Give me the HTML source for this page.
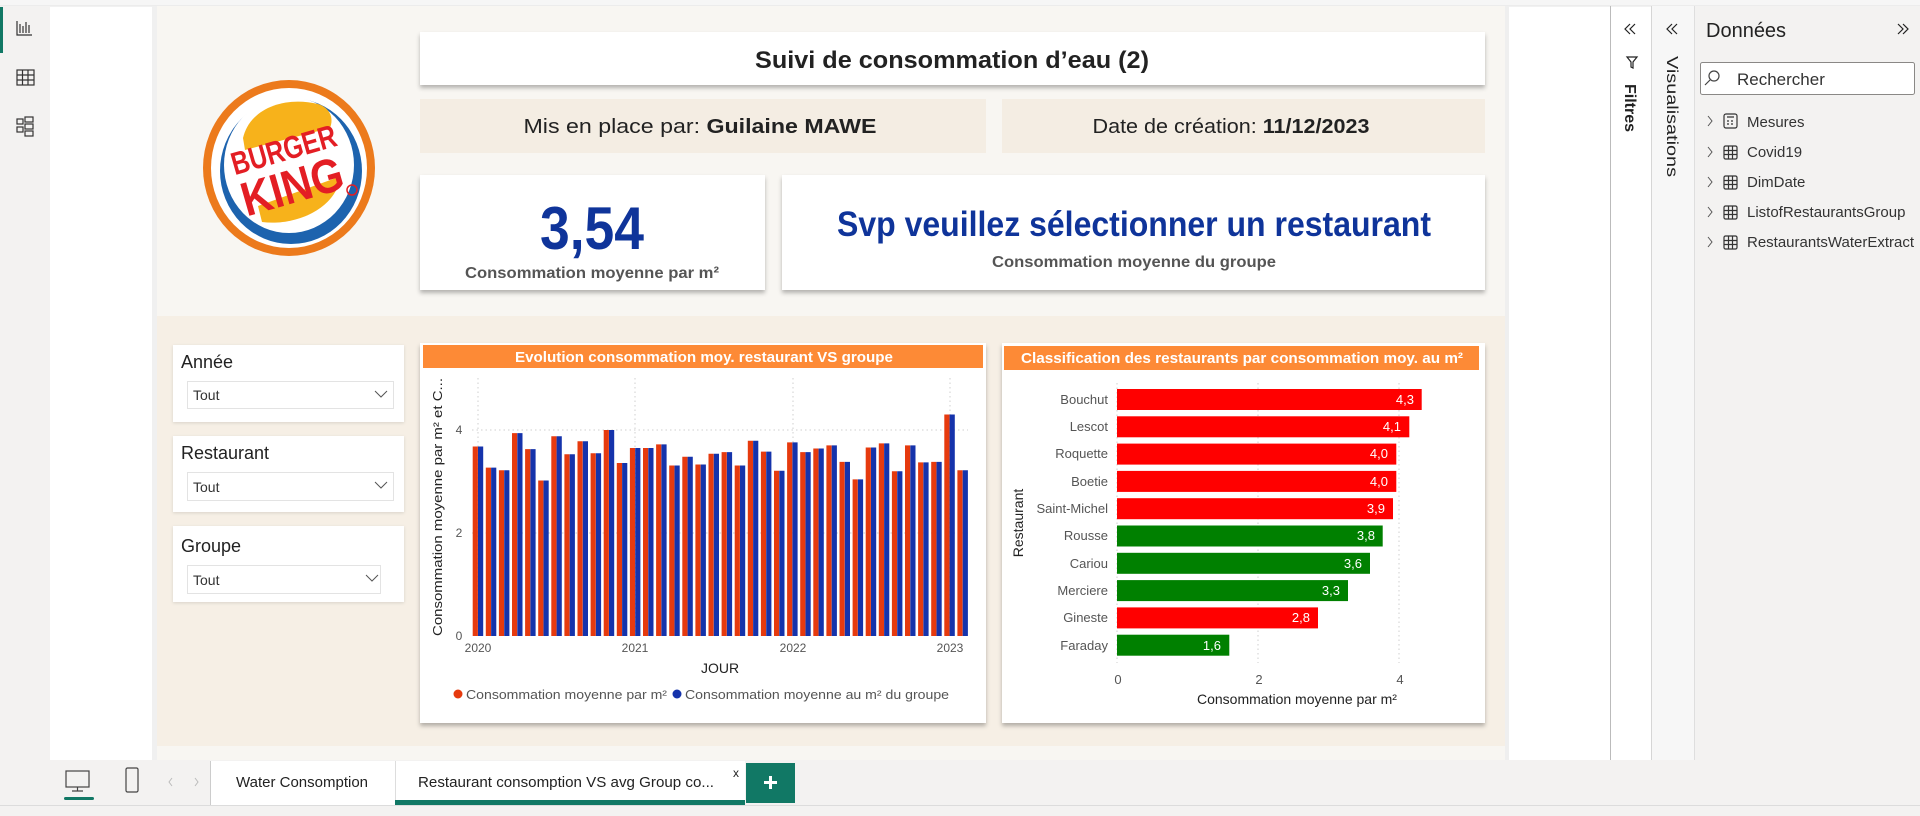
<!DOCTYPE html>
<html><head><meta charset="utf-8"><style>
html,body{margin:0;padding:0;width:1920px;height:816px;overflow:hidden;background:#fff;}
svg{display:block;font-family:"Liberation Sans",sans-serif;}
</style></head><body>
<svg width="1920" height="816" viewBox="0 0 1920 816" xmlns="http://www.w3.org/2000/svg">
<defs>
<filter id="sh" x="-5%" y="-10%" width="110%" height="125%"><feDropShadow dx="0" dy="3" stdDeviation="2" flood-color="#000" flood-opacity="0.28"/></filter>
<filter id="sh2" x="-5%" y="-10%" width="110%" height="125%"><feDropShadow dx="0" dy="1" stdDeviation="1.5" flood-color="#000" flood-opacity="0.12"/></filter>
</defs>
<!-- top strip -->
<rect x="0" y="0" width="1920" height="6" fill="#f6f6f6"/>
<line x1="0" y1="6" x2="1920" y2="6" stroke="#e3e3e3"/>
<!-- left rail -->
<rect x="0" y="6" width="50" height="754" fill="#f3f2f1"/>
<rect x="0" y="7" width="3" height="46" fill="#117865"/>
<g fill="none" stroke="#333" stroke-width="1.2">
<path d="M17 21v14h15M20 33v-9M23 33v-7M26 33v-11M29 33v-8"/>
<rect x="17" y="70" width="17" height="15"/><path d="M17 75h17M17 80h17M22.5 70v15M28 70v15"/>
<rect x="17" y="119" width="6" height="5"/><rect x="25" y="117" width="8" height="5"/><rect x="25" y="124" width="8" height="5"/><rect x="25" y="131" width="8" height="5"/><rect x="17" y="127" width="6" height="5"/>
</g>
<!-- canvas -->
<rect x="152" y="6" width="6" height="754" fill="#f0f0f0"/>
<rect x="157" y="6" width="1348" height="754" fill="#f8f6f2"/>
<rect x="157" y="316" width="1348" height="430" fill="#f6efe5"/>
<rect x="1505" y="6" width="4" height="754" fill="#efefef"/>
<!-- logo -->
<g>
<ellipse cx="289" cy="168" rx="86" ry="88" fill="#ec7a1c"/>
<ellipse cx="289" cy="168" rx="78" ry="80" fill="#fff"/>
<ellipse cx="291" cy="171" rx="71" ry="73" fill="#1d63ae"/>
<ellipse cx="289" cy="165" rx="65" ry="68" fill="#fff"/>
<path d="M243 138 C250 108 285 96 318 104 C330 108 334 118 330 128 L245 150 Z" fill="#f7b21b"/>
<path d="M262 222 C292 226 328 212 338 186 L336 178 L258 206 Z" fill="#f7b21b"/>
<g transform="rotate(-16 289 168)" fill="#e31e24" font-weight="bold" font-family="'Liberation Sans',sans-serif">
<text x="289" y="160" font-size="32" text-anchor="middle" textLength="108" lengthAdjust="spacingAndGlyphs">BURGER</text>
<text x="287" y="203" font-size="48" text-anchor="middle" textLength="104" lengthAdjust="spacingAndGlyphs">KING</text>
</g>
<circle cx="352" cy="190" r="5" fill="none" stroke="#e31e24" stroke-width="1.5"/>
</g>
<!-- header boxes -->
<rect x="420" y="32" width="1065" height="53" fill="#fff" filter="url(#sh)"/>
<text x="952" y="68" font-size="24" font-weight="bold" fill="#222" text-anchor="middle" textLength="394" lengthAdjust="spacingAndGlyphs">Suivi de consommation d’eau (2)</text>
<rect x="420" y="99" width="566" height="54" fill="#f4ede3"/>
<rect x="1002" y="99" width="483" height="54" fill="#f4ede3"/>
<text x="700" y="133" font-size="20" fill="#222" text-anchor="middle" textLength="353" lengthAdjust="spacingAndGlyphs">Mis en place par: <tspan font-weight="bold">Guilaine MAWE</tspan></text>
<text x="1231" y="133" font-size="20" fill="#222" text-anchor="middle" textLength="277" lengthAdjust="spacingAndGlyphs">Date de création: <tspan font-weight="bold">11/12/2023</tspan></text>
<!-- KPI -->
<rect x="420" y="175" width="345" height="115" fill="#fff" filter="url(#sh)"/>
<text x="592" y="249" font-size="60" font-weight="bold" fill="#0f349a" text-anchor="middle" textLength="104" lengthAdjust="spacingAndGlyphs">3,54</text>
<text x="592" y="278" font-size="16" font-weight="bold" fill="#555" text-anchor="middle" textLength="254" lengthAdjust="spacingAndGlyphs">Consommation moyenne par m²</text>
<rect x="782" y="175" width="703" height="115" fill="#fff" filter="url(#sh)"/>
<text x="1134" y="236" font-size="35" font-weight="bold" fill="#0f349a" text-anchor="middle" textLength="594" lengthAdjust="spacingAndGlyphs">Svp veuillez sélectionner un restaurant</text>
<text x="1134" y="267" font-size="16" font-weight="bold" fill="#555" text-anchor="middle" textLength="284" lengthAdjust="spacingAndGlyphs">Consommation moyenne du groupe</text>
<!-- slicers -->
<g>
<rect x="173" y="345" width="231" height="77" fill="#fff" filter="url(#sh2)"/>
<text x="181" y="368" font-size="18" fill="#222">Année</text>
<rect x="187.5" y="381.5" width="206" height="27" fill="#fff" stroke="#e3e3e3"/>
<text x="193" y="400" font-size="14" fill="#333">Tout</text>
<path d="M375 391l6 6 6-6" fill="none" stroke="#555"/>
<rect x="173" y="436" width="231" height="76" fill="#fff" filter="url(#sh2)"/>
<text x="181" y="459" font-size="18" fill="#222">Restaurant</text>
<rect x="187.5" y="472.5" width="206" height="28" fill="#fff" stroke="#e3e3e3"/>
<text x="193" y="492" font-size="14" fill="#333">Tout</text>
<path d="M375 482l6 6 6-6" fill="none" stroke="#555"/>
<rect x="173" y="526" width="231" height="76" fill="#fff" filter="url(#sh2)"/>
<text x="181" y="552" font-size="18" fill="#222">Groupe</text>
<rect x="187.5" y="565.5" width="193" height="28" fill="#fff" stroke="#e3e3e3"/>
<text x="193" y="585" font-size="14" fill="#333">Tout</text>
<path d="M366 575l6 6 6-6" fill="none" stroke="#555"/>
</g>
<!-- chart 1 -->
<rect x="420" y="343" width="566" height="380" fill="#fff" filter="url(#sh)"/>
<rect x="423" y="345" width="560" height="23" fill="#fd8a36"/>
<text x="704" y="362" font-size="15" font-weight="bold" fill="#fff" text-anchor="middle" textLength="378" lengthAdjust="spacingAndGlyphs">Evolution consommation moy. restaurant VS groupe</text>
<g stroke="#cfcfcf" stroke-dasharray="1.5 3" stroke-width="1">
<path d="M472 430H968M472 533H968M478 378V636M635 378V636M793 378V636M950 378V636"/>
</g>
<text transform="translate(442,507) rotate(-90)" font-size="13" fill="#222" text-anchor="middle" textLength="258" lengthAdjust="spacingAndGlyphs">Consommation moyenne par m² et C...</text>
<g font-size="12" fill="#555" text-anchor="middle">
<text x="459" y="434">4</text><text x="459" y="537">2</text><text x="459" y="640">0</text>
<text x="478" y="652">2020</text><text x="635" y="652">2021</text><text x="793" y="652">2022</text><text x="950" y="652">2023</text>
</g>
<text x="720" y="673" font-size="14" fill="#222" text-anchor="middle">JOUR</text>
<path fill="#e63a0e" d="M472.7,446.5h5.2V636h-5.2ZM485.8,467.6h5.2V636h-5.2ZM498.9,470.2h5.2V636h-5.2ZM512,433.1h5.2V636h-5.2ZM525.1,449.1h5.2V636h-5.2ZM538.2,480.5h5.2V636h-5.2ZM551.3,436.2h5.2V636h-5.2ZM564.4,454.2h5.2V636h-5.2ZM577.5,441.3h5.2V636h-5.2ZM590.6,453.2h5.2V636h-5.2ZM603.7,430h5.2V636h-5.2ZM616.8,463h5.2V636h-5.2ZM629.9,448h5.2V636h-5.2ZM643,448h5.2V636h-5.2ZM656.1,444.4h5.2V636h-5.2ZM669.2,465.5h5.2V636h-5.2ZM682.3,456.8h5.2V636h-5.2ZM695.4,464.5h5.2V636h-5.2ZM708.5,453.7h5.2V636h-5.2ZM721.6,452.1h5.2V636h-5.2ZM734.7,465.5h5.2V636h-5.2ZM747.8,440.8h5.2V636h-5.2ZM760.9,451.6h5.2V636h-5.2ZM774,470.7h5.2V636h-5.2ZM787.1,442.4h5.2V636h-5.2ZM800.2,452.1h5.2V636h-5.2ZM813.3,448.5h5.2V636h-5.2ZM826.4,445.4h5.2V636h-5.2ZM839.5,461.9h5.2V636h-5.2ZM852.6,479.4h5.2V636h-5.2ZM865.7,447.5h5.2V636h-5.2ZM878.8,443.4h5.2V636h-5.2ZM891.9,471.2h5.2V636h-5.2ZM905,445.4h5.2V636h-5.2ZM918.1,462.4h5.2V636h-5.2ZM931.2,461.9h5.2V636h-5.2ZM944.3,414.5h5.2V636h-5.2ZM957.4,470.2h5.2V636h-5.2Z"/>
<path fill="#1533ab" d="M478,446.5h5.2V636h-5.2ZM491.1,467.6h5.2V636h-5.2ZM504.2,470.2h5.2V636h-5.2ZM517.3,433.1h5.2V636h-5.2ZM530.4,449.1h5.2V636h-5.2ZM543.5,480.5h5.2V636h-5.2ZM556.6,436.2h5.2V636h-5.2ZM569.7,454.2h5.2V636h-5.2ZM582.8,441.3h5.2V636h-5.2ZM595.9,453.2h5.2V636h-5.2ZM609,430h5.2V636h-5.2ZM622.1,463h5.2V636h-5.2ZM635.2,448h5.2V636h-5.2ZM648.3,448h5.2V636h-5.2ZM661.4,444.4h5.2V636h-5.2ZM674.5,465.5h5.2V636h-5.2ZM687.6,456.8h5.2V636h-5.2ZM700.7,464.5h5.2V636h-5.2ZM713.8,453.7h5.2V636h-5.2ZM726.9,452.1h5.2V636h-5.2ZM740,465.5h5.2V636h-5.2ZM753.1,440.8h5.2V636h-5.2ZM766.2,451.6h5.2V636h-5.2ZM779.3,470.7h5.2V636h-5.2ZM792.4,442.4h5.2V636h-5.2ZM805.5,452.1h5.2V636h-5.2ZM818.6,448.5h5.2V636h-5.2ZM831.7,445.4h5.2V636h-5.2ZM844.8,461.9h5.2V636h-5.2ZM857.9,479.4h5.2V636h-5.2ZM871,447.5h5.2V636h-5.2ZM884.1,443.4h5.2V636h-5.2ZM897.2,471.2h5.2V636h-5.2ZM910.3,445.4h5.2V636h-5.2ZM923.4,462.4h5.2V636h-5.2ZM936.5,461.9h5.2V636h-5.2ZM949.6,414.5h5.2V636h-5.2ZM962.7,470.2h5.2V636h-5.2Z"/>
<circle cx="458" cy="694" r="4.5" fill="#e63a0e"/>
<text x="466" y="699" font-size="13" fill="#555" textLength="201" lengthAdjust="spacingAndGlyphs">Consommation moyenne par m²</text>
<circle cx="677" cy="694" r="4.5" fill="#1533ab"/>
<text x="685" y="699" font-size="13" fill="#555" textLength="264" lengthAdjust="spacingAndGlyphs">Consommation moyenne au m² du groupe</text>
<!-- chart 2 -->
<rect x="1002" y="343" width="483" height="380" fill="#fff" filter="url(#sh)"/>
<rect x="1004" y="346" width="475" height="24" fill="#fd8a36"/>
<text x="1242" y="363" font-size="15" font-weight="bold" fill="#fff" text-anchor="middle" textLength="442" lengthAdjust="spacingAndGlyphs">Classification des restaurants par consommation moy. au m²</text>
<g stroke="#cfcfcf" stroke-dasharray="1.5 3"><path d="M1117 383V663M1258 383V663M1399 383V663"/></g>
<g>
<rect x="1117" y="389" width="304.7" height="21" fill="#f00"/>
<rect x="1117" y="416.3" width="292.3" height="21" fill="#f00"/>
<rect x="1117" y="443.6" width="279.3" height="21" fill="#f00"/>
<rect x="1117" y="470.9" width="279.3" height="21" fill="#f00"/>
<rect x="1117" y="498.2" width="276" height="21" fill="#f00"/>
<rect x="1117" y="525.5" width="265.7" height="21" fill="#008000"/>
<rect x="1117" y="552.8" width="253" height="21" fill="#008000"/>
<rect x="1117" y="580.1" width="231" height="21" fill="#008000"/>
<rect x="1117" y="607.4" width="201" height="21" fill="#f00"/>
<rect x="1117" y="634.7" width="112.3" height="21" fill="#008000"/>
</g>
<g font-size="13" fill="#fff" text-anchor="end">
<text x="1414" y="404">4,3</text><text x="1401" y="431">4,1</text><text x="1388" y="458">4,0</text><text x="1388" y="486">4,0</text><text x="1385" y="513">3,9</text><text x="1375" y="540">3,8</text><text x="1362" y="568">3,6</text><text x="1340" y="595">3,3</text><text x="1310" y="622">2,8</text><text x="1221" y="650">1,6</text>
</g>
<g font-size="13" fill="#555" text-anchor="end">
<text x="1108" y="404">Bouchut</text><text x="1108" y="431">Lescot</text><text x="1108" y="458">Roquette</text><text x="1108" y="486">Boetie</text><text x="1108" y="513">Saint-Michel</text><text x="1108" y="540">Rousse</text><text x="1108" y="568">Cariou</text><text x="1108" y="595">Merciere</text><text x="1108" y="622">Gineste</text><text x="1108" y="650">Faraday</text>
</g>
<g font-size="13" fill="#555" text-anchor="middle"><text x="1118" y="684">0</text><text x="1259" y="684">2</text><text x="1400" y="684">4</text></g>
<text x="1297" y="704" font-size="14" fill="#222" text-anchor="middle">Consommation moyenne par m²</text>
<text transform="translate(1023,523) rotate(-90)" font-size="14" fill="#222" text-anchor="middle">Restaurant</text>
<!-- right panes -->
<line x1="1610.5" y1="6" x2="1610.5" y2="760" stroke="#bbb"/>
<rect x="1651" y="6" width="43" height="754" fill="#f7f7f7"/>
<line x1="1651.5" y1="6" x2="1651.5" y2="760" stroke="#d6d6d6"/>
<rect x="1694" y="6" width="226" height="754" fill="#f3f2f1"/>
<line x1="1694.5" y1="6" x2="1694.5" y2="760" stroke="#dedede"/>
<g fill="none" stroke="#222" stroke-width="1.2">
<path d="M1630 24l-5 5 5 5M1635 24l-5 5 5 5"/>
<path d="M1672 24l-5 5 5 5M1677 24l-5 5 5 5"/>
<path d="M1898 24l5 5-5 5M1903 24l5 5-5 5"/>
<path d="M1627 57h10l-4 5v6l-2-1v-5z"/>
</g>
<text transform="translate(1625,84) rotate(90)" font-size="16" font-weight="bold" fill="#222">Filtres</text>
<text transform="translate(1667,56) rotate(90)" font-size="16" fill="#222" textLength="121" lengthAdjust="spacingAndGlyphs">Visualisations</text>
<text x="1706" y="37" font-size="20" fill="#222">Données</text>
<rect x="1700.5" y="62.5" width="214" height="32" rx="2" fill="#fff" stroke="#8a8886"/>
<circle cx="1714" cy="76" r="5" fill="none" stroke="#444" stroke-width="1.2"/><path d="M1710 80l-5 5" stroke="#444" stroke-width="1.2"/>
<text x="1737" y="85" font-size="17" fill="#333">Rechercher</text>
<g fill="none" stroke="#555" stroke-width="1"><path d="M1708 116l4 5-4 5M1708 147l4 5-4 5M1708 177l4 5-4 5M1708 207l4 5-4 5M1708 237l4 5-4 5"/></g>
<g fill="none" stroke="#333" stroke-width="1.2">
<rect x="1724" y="114" width="13" height="14" rx="2"/><path d="M1727 117h7M1727 121h2M1731 121h2M1727 124h2M1731 124h2"/>
<rect x="1724" y="146" width="13" height="13" rx="1.5"/><path d="M1724 150.5h13M1724 154.5h13M1728.5 146v13M1732.5 146v13"/>
<rect x="1724" y="176" width="13" height="13" rx="1.5"/><path d="M1724 180.5h13M1724 184.5h13M1728.5 176v13M1732.5 176v13"/>
<rect x="1724" y="206" width="13" height="13" rx="1.5"/><path d="M1724 210.5h13M1724 214.5h13M1728.5 206v13M1732.5 206v13"/>
<rect x="1724" y="236" width="13" height="13" rx="1.5"/><path d="M1724 240.5h13M1724 244.5h13M1728.5 236v13M1732.5 236v13"/>
</g>
<g font-size="15" fill="#333">
<text x="1747" y="127">Mesures</text><text x="1747" y="157">Covid19</text><text x="1747" y="187">DimDate</text><text x="1747" y="217">ListofRestaurantsGroup</text><text x="1747" y="247">RestaurantsWaterExtract</text>
</g>
<!-- bottom tabs -->
<rect x="0" y="760" width="1920" height="45" fill="#f3f2f1"/>
<g fill="none" stroke="#444" stroke-width="1.2">
<rect x="66" y="771" width="23" height="16"/><path d="M77.5 787v4M72 791h11"/>
<rect x="126" y="768" width="12" height="24" rx="1.5"/>
</g>
<rect x="64" y="797" width="30" height="3" rx="1.5" fill="#117865"/>
<path d="M172 778l-3 4 3 4M195 778l3 4-3 4" fill="none" stroke="#bbb"/>
<rect x="211" y="761" width="184" height="44" fill="#fff"/>
<line x1="210.5" y1="761" x2="210.5" y2="805" stroke="#ccc"/>
<text x="302" y="787" font-size="15" fill="#222" text-anchor="middle">Water Consomption</text>
<rect x="395" y="761" width="350" height="44" fill="#fff"/>
<line x1="395.5" y1="761" x2="395.5" y2="805" stroke="#ddd"/>
<rect x="395" y="800" width="350" height="5" fill="#117865"/>
<text x="566" y="787" font-size="15" fill="#222" text-anchor="middle" textLength="296" lengthAdjust="spacingAndGlyphs">Restaurant consomption VS avg Group co...</text>
<text x="736" y="777" font-size="12" fill="#222" text-anchor="middle">x</text>
<rect x="746" y="763" width="49" height="40" fill="#117865"/>
<path d="M770.5 776v13M764 782.5h13" stroke="#fff" stroke-width="3"/>
<rect x="0" y="805" width="1920" height="11" fill="#f3f2f1"/>
<line x1="0" y1="805.5" x2="1920" y2="805.5" stroke="#dcdcdc"/>
</svg>
</body></html>
